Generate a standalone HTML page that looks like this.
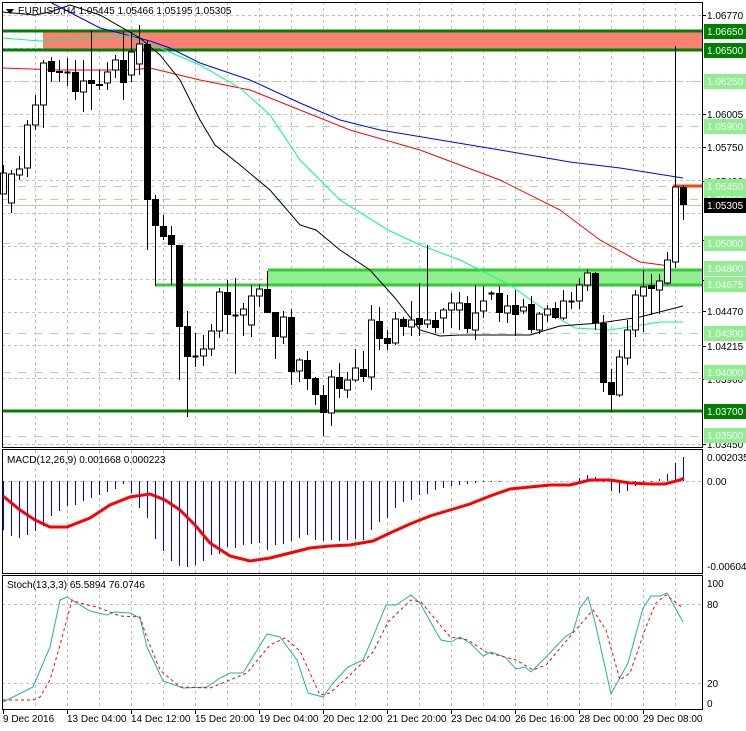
<!DOCTYPE html>
<html><head><meta charset="utf-8"><style>
html,body{margin:0;padding:0;background:#fff;}
svg{display:block;font-family:"Liberation Sans",sans-serif;font-size:10px;}
</style></head><body>
<svg id="s" width="746" height="731" xmlns="http://www.w3.org/2000/svg"></svg>
<script>
const s=document.getElementById('s');let h='';
const L=2,R=703;
for(let x=35;x<=700;x+=32){h+=`<line x1="${x+.5}" y1="2" x2="${x+.5}" y2="447" stroke="#c0c0c0" stroke-dasharray="3,3"/><line x1="${x+.5}" y1="450" x2="${x+.5}" y2="573" stroke="#c0c0c0" stroke-dasharray="3,3"/><line x1="${x+.5}" y1="577" x2="${x+.5}" y2="708" stroke="#c0c0c0" stroke-dasharray="3,3"/>`;}
for(let y=15;y<=447;y+=33){h+=`<line x1="${L}" y1="${y+.5}" x2="${R}" y2="${y+.5}" stroke="#c0c0c0" stroke-dasharray="3,3"/>`;}
[481].forEach(y=>h+=`<line x1="${L}" y1="${y+.5}" x2="${R}" y2="${y+.5}" stroke="#c0c0c0" stroke-dasharray="3,3"/>`);
[604,683].forEach(y=>h+=`<line x1="${L}" y1="${y+.5}" x2="${R}" y2="${y+.5}" stroke="#c0c0c0" stroke-dasharray="3,3"/>`);
[81,126,186,199,243,333,372,436].forEach(y=>h+=`<line x1="${L}" y1="${y+.5}" x2="${R}" y2="${y+.5}" stroke="#90ee90" stroke-width="1" stroke-dasharray="8,8"/>`);
h+=`<line x1="${L}" y1="205.5" x2="${R}" y2="205.5" stroke="#c0c0c0"/>`;
h+=`<rect x="43" y="31" width="${R-43}" height="19" fill="#fa8072"/>`;
h+=`<line x1="${L}" y1="31" x2="${R}" y2="31" stroke="#008000" stroke-width="3"/><line x1="${L}" y1="50" x2="${R}" y2="50" stroke="#008000" stroke-width="3"/>`;
h+=`<rect x="268" y="270" width="${R-268}" height="15" fill="#90ee90"/>`;
h+=`<line x1="268" y1="270" x2="${R}" y2="270" stroke="#32cd32" stroke-width="3"/><line x1="155" y1="285" x2="${R}" y2="285" stroke="#32cd32" stroke-width="3"/>`;
h+=`<line x1="${L}" y1="411" x2="${R}" y2="411" stroke="#008000" stroke-width="3"/>`;
h+=`<line x1="673" y1="186" x2="${R}" y2="186" stroke="#ff4500" stroke-width="3"/>`;
const pl=(pts,c,w,d)=>h+=`<polyline points="${pts}" fill="none" stroke="${c}" stroke-width="${w||1}" ${d?'stroke-dasharray="'+d+'"':''}/>`;
pl("50,2 100,28 150,41 170,48 200,63 250,80 300,103 340,120 380,130 440,140 500,150 570,162 620,168 683,178","#0000ff");
pl("2,68 60,70 130,70 150,68 200,80 250,90 300,110 350,130 420,150 500,180 560,210 600,240 640,262 670,266","#ff0000");
pl("2,38 40,41 100,37 130,36 160,48 200,65 240,88 270,115 300,160 340,200 388,230 420,245 460,260 510,285 545,310 575,328 610,330 660,322 683,322","#00ff7f");
pl("2,12 35,15 50,12 70,5 100,15 140,38 160,55 180,80 200,120 215,145 240,165 270,190 300,225 316,230 340,250 370,270 395,298 420,330 440,336 460,335 530,335 560,326 600,323 640,317 683,306","#000");
const C=[[194,165,194,173],[203,170,213,174],[175,156,180,169],[168,120,177,125],[125,95,130,105],[105,60,128,63],[61,57,82,72],[71,60,82,73],[72,58,86,72],[72,60,100,92],[92,60,112,81],[80,30,110,84],[84,70,90,86],[83,62,90,72],[70,55,78,60],[60,32,100,83],[75,32,82,52],[64,25,75,44],[44,40,250,200],[199,195,286,226],[226,215,240,237],[235,226,285,245],[245,245,380,327],[326,311,417,357],[356,333,367,357],[356,335,366,349],[349,324,356,331],[331,288,338,292],[292,280,334,315],[315,278,374,316],[315,303,336,309],[325,285,337,296],[296,284,307,289],[289,271,313,313],[312,312,359,337],[337,311,344,317],[317,309,385,372],[371,358,382,360],[360,351,390,379],[378,377,405,395],[395,385,436,413],[413,370,426,377],[377,363,398,389],[390,372,398,380],[380,349,382,368],[369,351,382,377],[377,305,390,320],[321,307,350,339],[338,330,350,344],[343,312,345,319],[319,317,336,327],[327,301,336,320],[318,283,336,325],[324,245,328,320],[320,312,333,328],[318,308,333,310],[310,293,328,303],[310,292,330,303],[303,296,333,329],[330,285,340,313],[311,286,318,301],[293,291,300,294],[293,286,322,313],[313,295,323,306],[305,290,336,315],[311,299,314,307],[304,296,333,330],[330,312,334,314],[315,305,322,309],[308,302,319,318],[318,290,320,301],[301,292,309,302],[301,278,309,285],[285,269,291,273],[273,272,330,323],[323,315,392,383],[382,369,412,395],[395,350,397,357],[358,320,365,330],[330,290,337,295],[296,270,332,287],[285,274,315,289],[290,274,314,281],[283,252,285,260],[262,46,268,187],[187,185,220,205]];
C.forEach((c,k)=>{const x=3+8*k+.5;const [o,hi,lo,cl]=c;h+=`<line x1="${x}" y1="${hi}" x2="${x}" y2="${lo}" stroke="#000"/>`;
const t=Math.min(o,cl),b=Math.max(o,cl);if(b-t<2){h+=`<line x1="${x-3}" y1="${t+.5}" x2="${x+3}" y2="${t+.5}" stroke="#000" stroke-width="2"/>`;}
else if(cl<o)h+=`<rect x="${x-3}" y="${t}" width="6" height="${b-t}" fill="#fff" stroke="#000"/>`;else h+=`<rect x="${x-3.5}" y="${t}" width="7" height="${b-t}" fill="#000"/>`;});
const H=[530,536,538,535,531,526,516,511,506,505,501,498,495,492,489,484,493,508,518,539,551,561,566,567,565,561,555,554,547,548,545,544,543,550,545,544,541,538,535,540,541,540,541,540,539,540,530,522,518,508,502,500,495,494,490,488,486,485,484,483,482,482,482,481,481,481,481,481,481,481,481,481,478,475,477,482,491,493,491,486,483,482,479,474,463,457];
H.forEach((v,k)=>{const x=3+8*k+.5;h+=`<line x1="${x}" y1="481" x2="${x}" y2="${v}" stroke="#0000ff" stroke-width="1"/>`;});
pl("3,496 20,510 35,520 50,527 67,527 90,518 110,505 130,497 150,494 165,500 180,510 195,525 210,543 230,556 250,561 270,558 290,553 310,548 330,546 350,545 373,541 390,533 410,524 430,516 450,510 470,504 490,496 510,489 530,487 550,485 570,485 590,480 610,480 630,483 650,484 665,484 680,480 684,478","#ff0000",3);
pl("3,702 33,687 50,647 60,600 67,597 90,611 107,615 115,612 130,613 140,618 147,647 163,681 183,688 207,687 220,678 230,673 243,673 267,634 280,637 297,660 308,693 323,697 333,683 348,667 363,660 373,637 386,605 396,605 411,595 420,603 435,630 441,640 451,642 460,637 470,643 483,656 491,652 505,657 516,669 525,667 531,672 546,657 565,637 573,632 580,608 588,597 595,622 611,694 628,663 643,608 651,596 660,596 667,593 683,622","#20b2aa");
pl("3,700 33,700 40,697 50,680 60,645 72,600 80,603 100,608 120,616 140,617 147,638 160,670 180,687 210,688 230,680 247,673 270,645 285,638 300,651 320,695 330,693 350,675 373,652 388,622 411,600 421,602 450,637 468,640 486,652 516,660 533,670 546,665 573,633 593,610 606,630 620,680 630,673 646,627 656,603 666,595 683,608","#ff0000",1,"3,3");
h+=`<rect x="2.5" y="2.5" width="700" height="445" fill="none" stroke="#000"/><rect x="2.5" y="449.5" width="700" height="124" fill="none" stroke="#000"/><rect x="2.5" y="575.5" width="700" height="134" fill="none" stroke="#000"/>`;
[[15,'1.06770'],[114,'1.06005'],[147,'1.05750'],[181,'1.05490'],[240,'1.05235'],[280,'1.04725'],[311,'1.04470'],[346,'1.04215'],[379,'1.03960'],[444,'1.03450']].forEach(a=>h+=`<line x1="703" y1="${a[0]+.5}" x2="706" y2="${a[0]+.5}" stroke="#000"/><text x="707" y="${a[0]+4}" fill="#000">${a[1]}</text>`);
const box=(y,t,bg,fg)=>h+=`<rect x="704" y="${y-7}" width="42" height="15" fill="${bg}"/><text x="707" y="${y+4}" fill="${fg}">${t}</text>`;
[[81,'1.06250'],[126,'1.05900'],[186,'1.05450'],[199,'1.05350'],[243,'1.05000'],[333,'1.04300'],[372,'1.04000'],[435,'1.03500']].forEach(a=>box(a[0],a[1],'#90ee90','#fff'));
box(268,'1.04800','#90ee90','#fff');box(284,'1.04675','#90ee90','#fff');
box(31,'1.06650','#008000','#fff');box(50,'1.06500','#008000','#fff');box(411,'1.03700','#008000','#fff');
box(205,'1.05305','#000','#fff');
h+=`<text x="707" y="461">0.002035</text><text x="707" y="485">0.00</text><text x="707" y="570">-0.006044</text>`;
h+=`<text x="707" y="587">100</text><text x="707" y="608">80</text><text x="707" y="687">20</text><text x="707" y="707">0</text>`;
h+=`<text x="7" y="463">MACD(12,26,9) 0.001668 0.000223</text><text x="7" y="588">Stoch(13,3,3) 65.5894 76.0746</text>`;
h+=`<text x="18" y="14" fill="#000">EURUSD,H4  1.05445 1.05466 1.05195 1.05305</text><path d="M6,9 L14,9 L10,14 Z" fill="#000"/>`;
[[3,'9 Dec 2016'],[67,'13 Dec 04:00'],[131,'14 Dec 12:00'],[195,'15 Dec 20:00'],[259,'19 Dec 04:00'],[323,'20 Dec 12:00'],[387,'21 Dec 20:00'],[451,'23 Dec 04:00'],[515,'26 Dec 16:00'],[579,'28 Dec 00:00'],[643,'29 Dec 08:00']].forEach(a=>h+=`<line x1="${a[0]+.5}" y1="710" x2="${a[0]+.5}" y2="714" stroke="#000"/><text x="${a[0]}" y="722">${a[1]}</text>`);
s.innerHTML=h;
</script>
</body></html>
